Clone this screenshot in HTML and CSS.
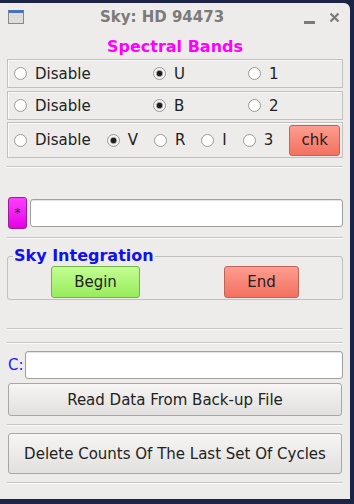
FILE: index.html
```html
<!DOCTYPE html>
<html lang="en">
<head>
  <meta charset="UTF-8">
  <title>Sky: HD 94473</title>
  <link rel="stylesheet" href="styles.css">
</head>
<body>

<div class="window">
  <!-- BARRA DE TITULO -->
  <div class="titlebar">
    <div class="win-icon"><span></span></div>
    <div class="title">Sky: HD 94473</div>
    <div class="win-btns">
      <span class="min"></span>
      <svg class="close" width="11" height="11" viewBox="0 0 11 11"><path d="M1.5 1.5 L9.5 9.5 M9.5 1.5 L1.5 9.5" stroke="#7a7a7a" stroke-width="2.2"/></svg>
    </div>
  </div>

  <div class="content">
    <div class="heading">Spectral Bands</div>

    <div class="band band-3col">
      <label class="opt"><input type="radio" name="b1"> Disable</label>
      <label class="opt"><input type="radio" name="b1" checked> U</label>
      <label class="opt"><input type="radio" name="b1"> 1</label>
    </div>

    <div class="band band-3col second">
      <label class="opt"><input type="radio" name="b2"> Disable</label>
      <label class="opt"><input type="radio" name="b2" checked> B</label>
      <label class="opt"><input type="radio" name="b2"> 2</label>
    </div>

    <div class="band band-flex">
      <label class="opt"><input type="radio" name="b3"> Disable</label>
      <label class="opt"><input type="radio" name="b3" checked> V</label>
      <label class="opt"><input type="radio" name="b3"> R</label>
      <label class="opt"><input type="radio" name="b3"> I</label>
      <label class="opt"><input type="radio" name="b3"> 3</label>
      <button class="btn red chk">chk</button>
    </div>

    <div class="sep s1"></div>

    <div class="star-row">
      <button class="star">*</button>
      <input class="entry" type="text">
    </div>

    <div class="sep s2"></div>

    <fieldset class="frame">
      <legend>Sky Integration</legend>
      <button class="btn green begin">Begin</button>
      <button class="btn red end">End</button>
    </fieldset>

    <div class="sep s3"></div>
    <div class="sep s4"></div>

    <div class="c-row">
      <span class="c-label">C:</span>
      <input class="entry" type="text">
    </div>

    <button class="btn gray wide read">Read Data From Back-up File</button>

    <div class="sep s5"></div>

    <button class="btn gray wide delete">Delete Counts Of The Last Set Of Cycles</button>

    <div class="sep s6"></div>
  </div>
</div>

</body>
</html>
```

FILE: styles.css
```css
* { margin: 0; padding: 0; box-sizing: border-box; }

body {
  background: #1b2444;
  font-family: 'DejaVu Sans', sans-serif;
  font-size: 15px;
  color: #222;
  height: 504px;
  overflow: hidden;
}

.window {
  margin-top: 3px;
  width: 350px;
  height: 496px;
  background: #edecea;
  border-top-right-radius: 6px;
}

/* barra de titulo */
.titlebar {
  height: 28px;
  display: flex;
  align-items: center;
}

.win-icon {
  width: 16px;
  height: 14px;
  margin-left: 8px;
  border: 1px solid #8a8a8a;
  border-top: 3px solid #4a72b8;
  background: #dcdcda;
}

.title {
  flex: 1;
  text-align: center;
  font-weight: bold;
  font-size: 15px;
  color: #7b7b7b;
  padding-right: 4px;
}

.win-btns {
  display: flex;
  align-items: center;
  gap: 14px;
  margin-right: 10px;
}

.min {
  width: 11px;
  height: 3px;
  background: #7a7a7a;
  margin-top: 10px;
}

.content { padding: 0 7px 0 7px; }

.heading {
  height: 28px;
  padding-top: 7px;
  line-height: 18px;
  text-align: center;
  font-weight: bold;
  font-size: 16px;
  color: #ff00ff;
}

/* linhas de bandas */
.band {
  border: 1px solid #c2c0be;
  box-shadow: inset 1px 1px 0 #fafafa;
  height: 29px;
  padding-left: 6px;
  align-items: center;
}

.band.second { margin-top: 3px; }

.band-3col {
  display: grid;
  grid-template-columns: 139px 95px 1fr;
}

.band-flex {
  display: flex;
  gap: 16px;
  height: 36px;
  margin-top: 2px;
}

.opt {
  display: flex;
  align-items: center;
  gap: 8px;
  line-height: 18px;
}

.opt input {
  appearance: none;
  width: 13px;
  height: 13px;
  border-radius: 50%;
  border: 1px solid #9c9a98;
  background: #fff;
  margin: 0;
  flex: none;
}

.opt input:checked {
  background: radial-gradient(circle, #1e1e1e 0 2.5px, #9a9a9a 3px, #f4f4f4 4px);
}

/* botoes */
.btn {
  font-family: 'DejaVu Sans', sans-serif;
  font-size: 15px;
  color: #222;
  border-radius: 3px;
  cursor: pointer;
}

.red {
  background: linear-gradient(#fc9d90, #f4705f);
  border: 1px solid #c06456;
}

.green {
  background: linear-gradient(#c2fd92, #98ec5c);
  border: 1px solid #74b24c;
}

.gray {
  background: linear-gradient(#f6f5f4, #e2e0de);
  border: 1px solid #a9a7a5;
}

.chk {
  width: 51px;
  height: 31px;
}

.sep {
  height: 2px;
  border-top: 1px solid #c8c6c4;
  border-bottom: 1px solid #fbfbfb;
}

.s1 { margin-top: 8px; }
.s2 { margin-top: 8px; }
.s3 { margin-top: 28px; }
.s4 { margin-top: 12px; }
.s5 { margin-top: 8px; }
.s6 { margin-top: 8px; }

.star-row {
  margin-top: 29px;
  display: flex;
  align-items: center;
  gap: 3px;
  padding-left: 1px;
}

.star {
  width: 19px;
  height: 32px;
  background: linear-gradient(#ff40ff, #e400e4);
  border: 1px solid #9a1c9a;
  border-radius: 3px;
  font-size: 12px;
  color: #222;
  font-family: 'DejaVu Sans', sans-serif;
}

.entry {
  flex: 1;
  height: 28px;
  background: #fff;
  border: 1px solid #a2a09e;
  border-radius: 3px;
  box-shadow: inset 0 1px 1px rgba(0,0,0,0.12);
}

/* frame sky integration */
.frame {
  margin-top: 7px;
  border: 1px solid #c2c0be;
  border-radius: 3px;
  padding: 0 0 1px 4px;
  display: flex;
  gap: 84px;
}

.frame legend {
  font-weight: bold;
  font-size: 16px;
  line-height: 20px;
  color: #1010f0;
  margin-left: 1px;
  padding: 0 1px;
}

.begin { width: 89px; height: 32px; margin-left: 39px; }
.end { width: 75px; height: 32px; }

.c-row {
  margin-top: 7px;
  display: flex;
  align-items: center;
  gap: 1px;
  padding-left: 1px;
}

.c-label { color: #1a1aff; }

.wide {
  display: block;
  width: 334px;
  margin-left: 1px;
}

.read { height: 33px; margin-top: 4px; }
.delete { height: 41px; margin-top: 7px; }
```
